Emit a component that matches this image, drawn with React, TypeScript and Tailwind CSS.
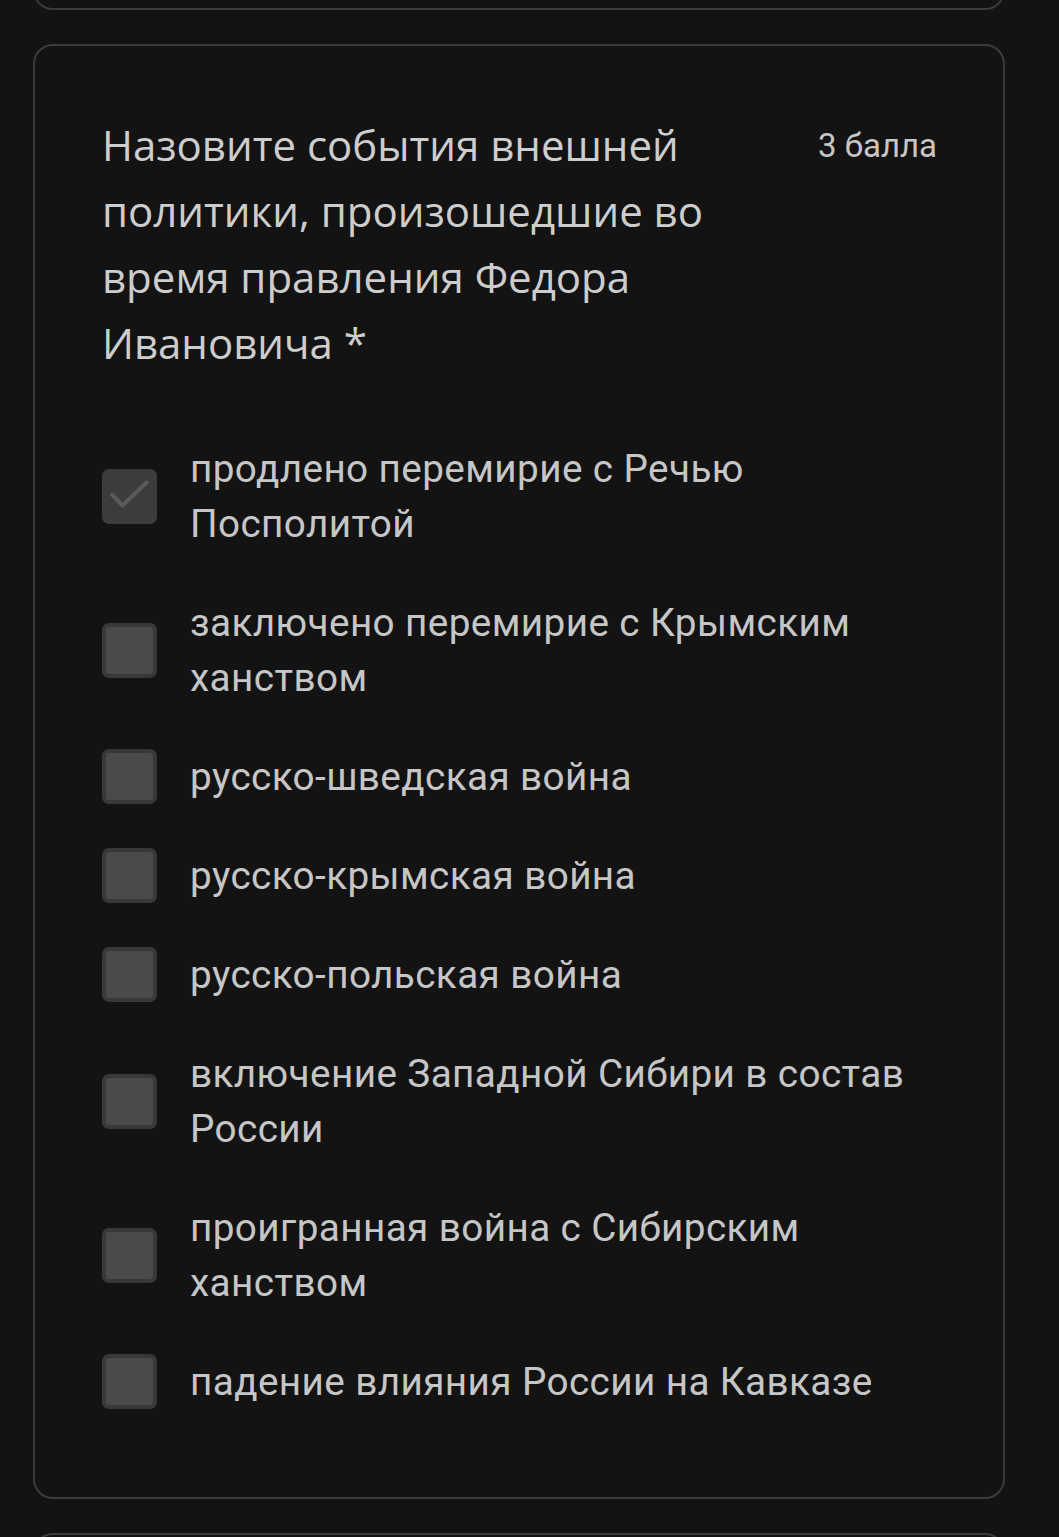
import React from "react";

const options: { text: string; checked?: boolean }[] = [
  { text: "продлено перемирие с Речью Посполитой", checked: true },
  { text: "заключено перемирие с Крымским ханством" },
  { text: "русско-шведская война" },
  { text: "русско-крымская война" },
  { text: "русско-польская война" },
  { text: "включение Западной Сибири в состав России" },
  { text: "проигранная война с Сибирским ханством" },
  { text: "падение влияния России на Кавказе" },
];

function Box({ checked }: { checked?: boolean }) {
  if (checked) {
    return (
      <div className="w-[55px] h-[55px] shrink-0 rounded-[7px] bg-[#3c3c3c]">
        <svg width="55" height="55" viewBox="0 0 55 55" fill="none">
          <path d="M10 25.5L20.5 36.5L44.5 13.5" stroke="#5a5a5a" strokeWidth="4" strokeLinecap="round" strokeLinejoin="round" />
        </svg>
      </div>
    );
  }
  return (
    <div className="w-[55px] h-[55px] shrink-0 rounded-[7px] bg-[#4a4a4a] border-[4px] border-[#383838]" />
  );
}

export default function App() {
  return (
    <div
      className="w-full h-[1537px] overflow-hidden bg-[#131313] flex flex-col gap-[34px] pl-[33px]"
      style={{ fontFamily: "Roboto, 'Noto Sans', sans-serif" }}
    >
      <div className="w-[972px] h-[60px] -mt-[50px] shrink-0 rounded-[20px] border-2 border-[#3b3b3b]" />
      <div className="w-[972px] shrink-0 rounded-[20px] border-2 border-[#3b3b3b] pl-[67px] pr-[66px] pt-[66px] pb-[88px]">
        <div className="flex justify-between items-start">
          <div
            className="text-[42px] leading-[66px] text-[#cdcdcd]"
            style={{ fontFamily: "'Open Sans', 'Noto Sans', sans-serif" }}
          >
            Назовите события внешней
            <br />
            политики, произошедшие во
            <br />
            время правления Федора
            <br />
            Ивановича *
          </div>
          <div className="text-[33px] leading-[66px] text-[#c6c6c6] pt-[1px]">3 балла</div>
        </div>
        <div className="mt-[65px] flex flex-col gap-[44px]">
          {options.map((o) => (
            <div key={o.text} className="flex items-center gap-[33px]">
              <Box checked={o.checked} />
              <div className="text-[38.7px] leading-[55px] tracking-[0.4px] text-[#c6c6c6] max-w-[746px]">
                {o.text}
              </div>
            </div>
          ))}
        </div>
      </div>
      <div className="w-[972px] h-[60px] shrink-0 rounded-[20px] border-2 border-[#3b3b3b]" />
    </div>
  );
}
